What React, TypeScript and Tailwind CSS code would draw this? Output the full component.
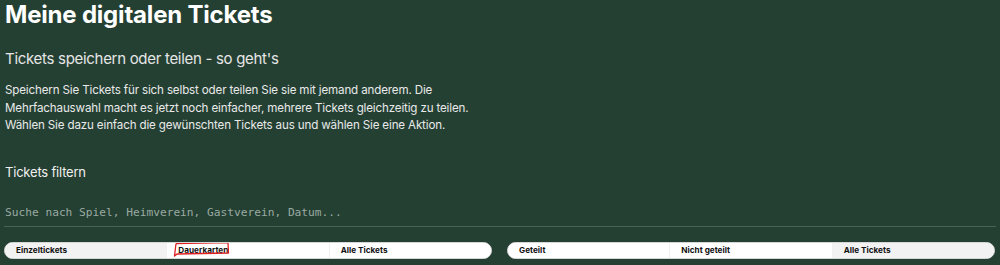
const sans = { fontFamily: "Inter, 'Noto Sans', sans-serif" };

type SegProps = {
  items: string[];
  active: number;
  mark?: number;
};

const Segmented = ({ items, active, mark }: SegProps) => {
  return (
    <div className="flex-1 flex h-[17px] rounded-full bg-white overflow-hidden border border-[#d6d6d6]">
      {items.map((label, i) => (
        <div
          key={label}
          className={`flex-1 flex items-center pl-[11px] text-[8.2px] font-bold text-[#111] ${
            i === active ? "bg-[#f2f2f2]" : "bg-white"
          } ${i > 0 ? "border-l border-[#f0f0f0]" : ""}`}
        >
          <span className="relative">
            {label}
            {mark === i && (
              <svg
                className="absolute left-[-5px] top-[-3px]"
                width="60"
                height="18"
                viewBox="0 0 60 18"
                fill="none"
              >
                <path
                  d="M3 2.5 L55 1.5 L55.5 12 L4 13 L1.5 15 L3 2.5"
                  stroke="#e02020"
                  strokeWidth="1.3"
                  strokeLinejoin="round"
                />
              </svg>
            )}
          </span>
        </div>
      ))}
    </div>
  );
};

export default function App() {
  return (
    <div className="w-[1000px] h-[265px] bg-[#244033] text-white px-[5px] overflow-hidden" style={sans}>
      <h1 className="text-[24px] font-bold leading-[30px] tracking-[-0.2px]">Meine digitalen Tickets</h1>

      <h2 className="mt-[18px] text-[15px] leading-[22px] tracking-[-0.3px] text-[#e6e6e6]">
        Tickets speichern oder teilen - so geht's
      </h2>

      <p className="mt-[12px] text-[11.6px] leading-[17.6px] tracking-[-0.15px] text-[#e9e9e9]">
        Speichern Sie Tickets für sich selbst oder teilen Sie sie mit jemand anderem. Die
        <br />
        Mehrfachauswahl macht es jetzt noch einfacher, mehrere Tickets gleichzeitig zu teilen.
        <br />
        Wählen Sie dazu einfach die gewünschten Tickets aus und wählen Sie eine Aktion.
      </p>

      <h3 className="mt-[27px] text-[13px] leading-[20px] tracking-[-0.2px] text-[#f0f0f0]">Tickets filtern</h3>

      <div className="mt-[16px] pb-[4px] border-b border-[#4a6358] mr-[-1px] ml-[-1px] pl-[1px]">
        <input
          className="w-full bg-transparent outline-none text-[11.2px] leading-[15px] text-white placeholder:text-[#9aaaa2]"
          style={{ fontFamily: "'DejaVu Sans Mono', monospace" }}
          placeholder="Suche nach Spiel, Heimverein, Gastverein, Datum..."
        />
      </div>

      <div className="mt-[15px] flex gap-[15px] ml-[-1px]">
        <Segmented items={["Einzeltickets", "Dauerkarten", "Alle Tickets"]} active={0} mark={1} />
        <Segmented items={["Geteilt", "Nicht geteilt", "Alle Tickets"]} active={2} />
      </div>
    </div>
  );
}
